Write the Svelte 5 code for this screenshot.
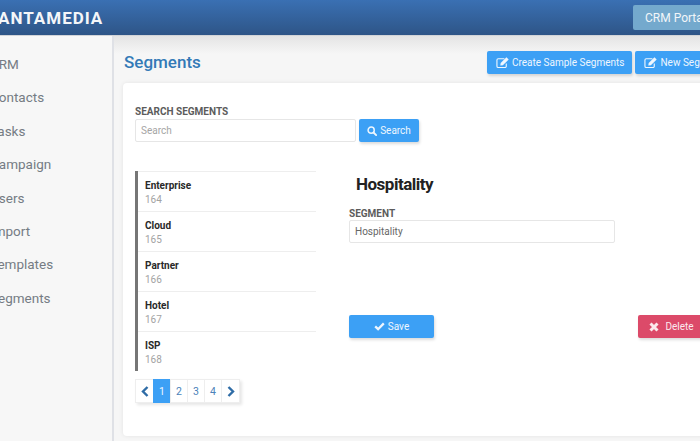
<script>
  const navItems = ['CRM', 'Contacts', 'Tasks', 'Campaign', 'Users', 'Import', 'Templates', 'Segments'];
  const segments = [
    { name: 'Enterprise', id: 164 },
    { name: 'Cloud', id: 165 },
    { name: 'Partner', id: 166 },
    { name: 'Hotel', id: 167 },
    { name: 'ISP', id: 168 },
  ];
  const pages = [1, 2, 3, 4];
</script>

{#snippet editIcon()}
  <svg class="icon" width="14" height="13" viewBox="0 0 15 13" aria-hidden="true">
    <path d="M11 7.5V10.5a1.4 1.4 0 0 1-1.4 1.4H2.4A1.4 1.4 0 0 1 1 10.5V3.9a1.4 1.4 0 0 1 1.4-1.4H9" fill="none" stroke="currentColor" stroke-width="1.2"/>
    <path d="M5 7 11.2 0.8 13.6 3.2 7.4 9.4 4.6 9.8Z" fill="currentColor"/>
  </svg>
{/snippet}

<div class="page">
  <header class="topbar">
    <div class="logo">ANTAMEDIA</div>
    <button class="portal">CRM Portal</button>
  </header>

  <div class="body">
    <nav class="sidebar">
      {#each navItems as item}
        <div class="nav-item">{item}</div>
      {/each}
    </nav>

    <main class="content">
      <div class="title-row">
        <h1>Segments</h1>
        <div class="title-actions">
          <button class="btn blue">{@render editIcon()} Create Sample Segments</button>
          <button class="btn blue">{@render editIcon()} New Segment</button>
        </div>
      </div>

      <section class="card">
        <div class="label">SEARCH SEGMENTS</div>
        <div class="search-row">
          <input class="field search-input" placeholder="Search" />
          <button class="btn blue search-btn">
            <svg class="icon" width="10" height="10" viewBox="0 0 12 12" aria-hidden="true">
              <circle cx="5" cy="5" r="3.7" fill="none" stroke="currentColor" stroke-width="1.8"/>
              <path d="M7.8 7.8 11 11" stroke="currentColor" stroke-width="2.2" stroke-linecap="round"/>
            </svg>
            Search
          </button>
        </div>

        <div class="columns">
          <div class="left">
            <ul class="list">
              {#each segments as s}
                <li>
                  <div class="name">{s.name}</div>
                  <div class="id">{s.id}</div>
                </li>
              {/each}
            </ul>
            <div class="pager">
              <span class="pg arrow">
                <svg width="8" height="11" viewBox="0 0 8 11" aria-hidden="true"><path d="M6.5 1 2 5.5 6.5 10" fill="none" stroke="currentColor" stroke-width="2.4"/></svg>
              </span>
              {#each pages as p}
                <span class="pg" class:active={p === 1}>{p}</span>
              {/each}
              <span class="pg arrow">
                <svg width="8" height="11" viewBox="0 0 8 11" aria-hidden="true"><path d="M1.5 1 6 5.5 1.5 10" fill="none" stroke="currentColor" stroke-width="2.4"/></svg>
              </span>
            </div>
          </div>

          <div class="detail">
            <h2>Hospitality</h2>
            <div class="label">SEGMENT</div>
            <input class="field detail-input" value="Hospitality" />
            <div class="detail-actions">
              <button class="btn blue save">
                <svg class="icon" width="11" height="9" viewBox="0 0 11 9" aria-hidden="true"><path d="M1.2 4.4 4.1 7.2 9.8 1.4" fill="none" stroke="currentColor" stroke-width="2.3"/></svg>
                Save
              </button>
              <button class="btn red delete">
                <svg class="icon" width="10" height="10" viewBox="0 0 10 10" aria-hidden="true"><path d="M1.5 1.5 8.5 8.5M8.5 1.5 1.5 8.5" stroke="currentColor" stroke-width="3"/></svg>
                Delete
              </button>
            </div>
          </div>
        </div>
      </section>
    </main>
  </div>
</div>

<style>
  :global(body) {
    margin: 0;
    overflow: hidden;
  }

  .page {
    width: 700px;
    height: 441px;
    overflow: hidden;
    font-family: Roboto, "Liberation Sans", sans-serif;
    background: #f6f6f6;
  }

  .topbar {
    height: 35px;
    display: flex;
    justify-content: space-between;
    align-items: center;
    background: linear-gradient(#3a70b3, #2e5587);
    border-bottom: 1px solid #d2d4d8;
  }

  .logo {
    margin-left: -2px;
    color: #f4f6f9;
    font-size: 17px;
    font-weight: 700;
    letter-spacing: 1px;
  }

  .portal {
    width: 90px;
    height: 25px;
    margin-right: -23px;
    padding: 0 0 0 12px;
    border: none;
    border-radius: 2px;
    background: #74a9cd;
    color: #f2f6f9;
    font: 400 12px Roboto, sans-serif;
    text-align: left;
    white-space: nowrap;
  }

  .body {
    display: flex;
    height: 405px;
  }

  .sidebar {
    width: 114px;
    flex: none;
    box-sizing: border-box;
    padding-top: 12px;
    background: #f7f7f7;
    border-right: 2px solid #dfe1e6;
    overflow: hidden;
  }

  .nav-item {
    height: 33.4px;
    line-height: 33.4px;
    margin-left: -10px;
    font-size: 13.5px;
    color: #757c84;
    white-space: nowrap;
  }

  .content {
    flex: 1;
    min-width: 0;
    padding: 0 0 0 9px;
    background: linear-gradient(#e4e4e4, #f6f6f6 18px);
  }

  .title-row {
    height: 47px;
    width: 700px;
    display: flex;
    align-items: center;
    padding-top: 5px;
    box-sizing: border-box;
  }

  h1 {
    width: 363px;
    flex: none;
    margin: 0 0 0 1px;
    font-size: 17px;
    font-weight: 500;
    color: #337ab7;
  }

  .title-actions {
    display: flex;
    gap: 3px;
  }

  .title-actions .btn {
    padding: 0 8px 0 9px;
    gap: 2px;
  }

  .btn {
    display: inline-flex;
    align-items: center;
    justify-content: center;
    gap: 3px;
    height: 23px;
    padding: 0;
    border: none;
    border-radius: 2px;
    font: 400 10px Roboto, sans-serif;
    white-space: nowrap;
    box-shadow: 1px 2px 3px rgba(0, 0, 0, 0.14);
  }

  .blue {
    background: #3ca0f5;
    color: #eef6fe;
  }

  .red {
    background: #dc4a69;
    color: #fbe9ed;
  }

  .card {
    width: 640px;
    height: 353px;
    box-sizing: border-box;
    padding: 23px 12px 0;
    border-radius: 4px;
    background: #fff;
    box-shadow: 0 0 4px rgba(0, 0, 0, 0.08);
  }

  .label {
    font-size: 10px;
    font-weight: 700;
    line-height: 12px;
    color: #5c5c5c;
  }

  .search-row {
    display: flex;
    gap: 3px;
    margin-top: 1px;
  }

  .field {
    box-sizing: border-box;
    height: 23px;
    padding: 0 5px;
    border: 1px solid #e6e6e6;
    border-radius: 2px;
    background: #fff;
    font: 400 10px Roboto, sans-serif;
    color: #666;
    outline: none;
  }

  .field::placeholder {
    color: #a5a5a5;
  }

  .search-input {
    width: 221px;
  }

  .search-btn {
    width: 60px;
  }

  .columns {
    display: flex;
    margin-top: 29px;
  }

  .left {
    width: 214px;
    flex: none;
  }

  .list {
    list-style: none;
    width: 181px;
    margin: 0;
    padding: 0;
    box-sizing: border-box;
    border-left: 3px solid #767676;
  }

  .list li {
    box-sizing: border-box;
    height: 40px;
    padding: 7px 0 0 7px;
    border-top: 1px solid #eeeeee;
  }

  .name {
    font-size: 10px;
    font-weight: 700;
    line-height: 13px;
    color: #292929;
  }

  .id {
    margin-top: 1px;
    font-size: 10px;
    line-height: 13px;
    color: #a3a3a3;
  }

  .pager {
    display: flex;
    width: max-content;
    margin-top: 8px;
    box-shadow: 2px 2px 3px rgba(0, 0, 0, 0.1);
  }

  .pg {
    box-sizing: border-box;
    width: 18px;
    height: 24px;
    display: flex;
    align-items: center;
    justify-content: center;
    border: 1px solid #eeeeee;
    margin-left: -1px;
    font-size: 10.5px;
    color: #4c82b9;
    background: #fff;
  }

  .pg:first-child {
    margin-left: 0;
  }

  .pg.arrow {
    width: 19px;
    color: #2e6ca6;
  }

  .pg.active {
    background: #3ca0f5;
    border-color: #3ca0f5;
    color: #eef6fe;
  }

  .detail {
    flex: 1;
    min-width: 0;
  }

  h2 {
    margin: 3px 0 0 7px;
    font-size: 17px;
    font-weight: 700;
    letter-spacing: -0.5px;
    line-height: 20px;
    color: #222;
  }

  .detail .label {
    margin-top: 14px;
  }

  .detail-input {
    display: block;
    width: 266px;
    margin-top: 0;
  }

  .detail-actions {
    display: flex;
    justify-content: space-between;
    width: 356px;
    margin-top: 72px;
  }

  .save {
    width: 85px;
    gap: 3px;
  }

  .delete {
    width: 67px;
    gap: 6px;
  }
</style>
